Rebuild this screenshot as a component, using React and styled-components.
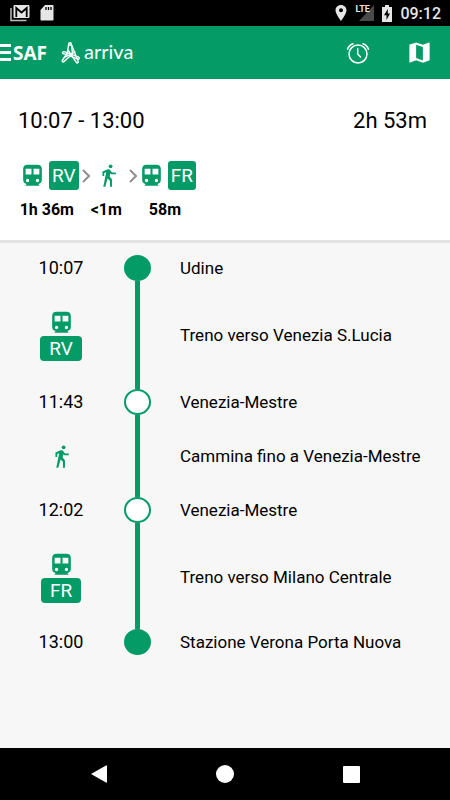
// vendor
import React from 'react';
import styled, { createGlobalStyle } from 'styled-components';

const stops = [
    { kind: 'stop', time: '10:07', label: 'Udine', first: true },
    { kind: 'leg', mode: 'train', line: 'RV', label: 'Treno verso Venezia S.Lucia' },
    { kind: 'stop', time: '11:43', label: 'Venezia-Mestre' },
    { kind: 'leg', mode: 'walk', label: 'Cammina fino a Venezia-Mestre' },
    { kind: 'stop', time: '12:02', label: 'Venezia-Mestre' },
    { kind: 'leg', mode: 'train', line: 'FR', label: 'Treno verso Milano Centrale' },
    { kind: 'stop', time: '13:00', label: 'Stazione Verona Porta Nuova', last: true },
];

const legs = [
    { mode: 'train', line: 'RV', duration: '1h 36m' },
    { mode: 'walk', duration: '<1m' },
    { mode: 'train', line: 'FR', duration: '58m' },
];

const TrainIcon = () => (
    <svg width='27' height='27' viewBox='0 0 24 24' fill='currentColor' fillRule='evenodd' aria-hidden='true'>
        <path d='M7.600 2.500h8.800c2.500 0 3.900 1.400 3.900 3.800v9.700c0 2-1.300 3.300-3.100 3.500l1.200 1.700H5.600l1.200-1.700c-1.800-.2-3.100-1.500-3.100-3.500V6.300c0-2.400 1.400-3.800 3.900-3.800zM5.900 6v5.200h5.200V6zM12.900 6v5.200h5.200V6zM7.600 14.900a1.500 1.500 0 100 3 1.500 1.500 0 000-3zM16.400 14.900a1.500 1.500 0 100 3 1.500 1.500 0 000-3z' />
    </svg>
);

const WalkIcon = () => (
    <svg width='25' height='25' viewBox='0 0 24 24' fill='currentColor' aria-hidden='true'>
        <circle cx='14' cy='3.2' r='1.8' />
        <path d='M9.8 8.9L7 22.8h1.9l2.2-8 2.3 2.2v5.800h1.900v-7.200l-2.200-2.600.6-3.100.9.900H19V9.100h-3.600l-1.700-2.200c-.4-.6-1-.9-1.700-.9-.3 0-.5.1-.8.1L6.200 8.100V12.400h1.700V9.500z' />
    </svg>
);

const ChevronIcon = () => (
    <svg width='10' height='16' viewBox='0 0 10 16' fill='none' stroke='#8f8f8f' strokeWidth='2' aria-hidden='true'>
        <path d='M2 2l6 6-6 6' />
    </svg>
);

const AlarmIcon = () => (
    <svg width='26' height='26' viewBox='0 0 26 26' fill='none' stroke='currentColor' strokeWidth='1.500' strokeLinecap='round' aria-hidden='true'>
        <circle cx='13' cy='14' r='9' />
        <path d='M12.700 8.500v5.500l2.800 3M2.500 9.300Q3.700 5.300 8 3.700M18 3.700q4.300 1.600 5.500 5.600' />
    </svg>
);

const MapIcon = () => (
    <svg width='27' height='27' viewBox='0 0 24 24' fill='currentColor' aria-hidden='true'>
        <path d='M20.5 3l-.16.03L15 5.1 9 3 3.36 4.9c-.21.07-.36.25-.36.48V20.5c0 .28.22.5.5.5l.16-.03L9 18.9l6 2.1 5.64-1.9c.21-.07.36-.25.36-.48V3.5c0-.28-.22-.5-.5-.5zM15 19l-6-2.11V5l6 2.11V19z' />
    </svg>
);

const ArrivaMark = () => (
    <svg width='20' height='24' viewBox='0 0 20 24' fill='none' stroke='currentColor' strokeWidth='1.400' strokeLinecap='round' strokeLinejoin='round' aria-hidden='true'>
        <circle cx='9' cy='3' r='1.300' />
        <path d='M7.500 4L6.300 12l-5 7.500c-.5 1.200.8 2 1.700 1L11.500 13l-.9-9' />
        <path d='M10.800 4.500l6.500 16.200c.2 1.300-1.300 1.700-2 .6L7 9' />
        <path d='M2 10.800c-1 .9-.3 2 .7 1.900L17 18.200c1.300.2 1.800-1.300.8-2L4 10.800c-.7-.3-1.300-.3-2 0z' />
        <path d='M3.500 16.500l10.500-5.500' />
    </svg>
);

const MailIcon = () => (
    <svg width='20' height='18' viewBox='0 0 20 18' aria-hidden='true'>
        <path d='M1 4v12.500h15.500' fill='none' stroke='#bdbdbd' strokeWidth='1.500' />
        <rect x='3.500' y='1' width='16' height='13' rx='1' fill='#e6e6e6' />
        <path d='M6.300 13V4l5.200 4.500L16.700 4v9' fill='none' stroke='#000' strokeWidth='1.800' />
    </svg>
);

const SdIcon = () => (
    <svg width='14' height='18' viewBox='0 0 14 18' aria-hidden='true'>
        <path d='M5 1h7.500c.6 0 1 .4 1 1v13.500c0 .6-.4 1-1 1h-11c-.6 0-1-.4-1-1V6z' fill='#e6e6e6' />
        <path d='M6 3v3M8.500 3v3M11 3v3' stroke='#000' strokeWidth='1.300' />
    </svg>
);

const PinIcon = () => (
    <svg width='12' height='18' viewBox='0 0 12 18' aria-hidden='true'>
        <path d='M6 1C3 1 .5 3.300.5 6.300.5 10 6 17 6 17s5.500-7 5.500-10.700C11.500 3.300 9 1 6 1zm0 7.200a2 2 0 110-4 2 2 0 010 4z' fill='#e6e6e6' />
    </svg>
);

const SignalIcon = () => (
    <svg width='15' height='16' viewBox='0 0 15 16' aria-hidden='true'>
        <path d='M15 0v16H0z' fill='#4a4a4a' />
    </svg>
);

const BatteryIcon = () => (
    <svg width='10' height='17' viewBox='0 0 10 17' aria-hidden='true'>
        <path d='M3 0h4v2h3v15H0V2h3z' fill='#e6e6e6' />
        <path d='M5.800 4L2 10.200h2.500V15L8 8.500H5.800z' fill='#000' />
    </svg>
);

const ModeIcon = ({ mode }) => mode === 'train' ? <TrainIcon /> : <WalkIcon />;

const TimelineRow = props => {
    const { kind, time, mode, line, label, first, last } = props;

    if (kind === 'stop') {
        return (
            <Row $height={ last ? 36 : 40 }>
                <Aside>{ time }</Aside>
                <Rail>
                    <Track $hidden={ first } />
                    <Dot $filled={ first || last } />
                    <Track $hidden={ last } />
                </Rail>
                <RowLabel>{ label }</RowLabel>
            </Row>
        );
    }

    return (
        <Row $height={ mode === 'train' ? 94 : 68 }>
            <Aside>
                <ModeIcon mode={ mode } />
                { line && <LineBadge>{ line }</LineBadge> }
            </Aside>
            <Rail>
                <Track />
            </Rail>
            <RowLabel>{ label }</RowLabel>
        </Row>
    );
};

export default function App() {
    return (
        <Screen>
            <GlobalStyle />
            <StatusBar>
                <StatusGroup $gap={ 10 }>
                    <MailIcon />
                    <SdIcon />
                </StatusGroup>
                <StatusGroup $gap={ 8 }>
                    <PinIcon />
                    <Signal>
                        <SignalIcon />
                        <Network>LTE</Network>
                    </Signal>
                    <BatteryIcon />
                    <Clock>09:12</Clock>
                </StatusGroup>
            </StatusBar>

            <AppBar>
                <MenuButton type='button' aria-label='Menu'>
                    <MenuBar />
                    <MenuBar />
                    <MenuBar />
                </MenuButton>
                <SafLogo>SAF</SafLogo>
                <ArrivaLogo>
                    <ArrivaMark />
                    <ArrivaName>arriva</ArrivaName>
                </ArrivaLogo>
                <Actions>
                    <IconButton type='button' aria-label='Promemoria'>
                        <AlarmIcon />
                    </IconButton>
                    <IconButton type='button' aria-label='Mappa'>
                        <MapIcon />
                    </IconButton>
                </Actions>
            </AppBar>

            <Summary>
                <SummaryTitle>
                    <span>10:07 - 13:00</span>
                    <span>2h 53m</span>
                </SummaryTitle>
                <Legs>
                    { legs.map((leg, index) => (
                        <React.Fragment key={ leg.duration }>
                            { index > 0 && (
                                <Separator>
                                    <ChevronIcon />
                                </Separator>
                            ) }
                            <Leg>
                                <LegIcons>
                                    <ModeIcon mode={ leg.mode } />
                                    { leg.line && <LegBadge>{ leg.line }</LegBadge> }
                                </LegIcons>
                                <Duration>{ leg.duration }</Duration>
                            </Leg>
                        </React.Fragment>
                    )) }
                </Legs>
            </Summary>

            <Timeline>
                { stops.map((stop, index) => (
                    <TimelineRow key={ index } { ...stop } />
                )) }
            </Timeline>

            <NavBar>
                <NavButton type='button' aria-label='Indietro'>
                    <svg width='18' height='20' viewBox='0 0 18 20' fill='#fff'>
                        <path d='M1 10L16 1.500q1-.5 1 .5v16q0 1-1 .5z' />
                    </svg>
                </NavButton>
                <NavButton type='button' aria-label='Home'>
                    <svg width='20' height='20' viewBox='0 0 20 20' fill='#fff'>
                        <circle cx='10' cy='10' r='9' />
                    </svg>
                </NavButton>
                <NavButton type='button' aria-label='Recenti'>
                    <svg width='20' height='20' viewBox='0 0 20 20' fill='#fff'>
                        <rect x='2' y='2' width='17' height='17' rx='1' />
                    </svg>
                </NavButton>
            </NavBar>
        </Screen>
    );
}

const GlobalStyle = createGlobalStyle`
    :root {
        --primary: #049b67;
    }

    * {
        box-sizing: border-box;
    }

    body {
        margin: 0;
        font-family: Roboto, sans-serif;
        color: #000;
    }

    svg {
        display: block;
        flex-shrink: 0;
    }

    button {
        border: 0;
        padding: 0;
        background: none;
        color: inherit;
        cursor: pointer;
    }
`;

const Screen = styled.div`
    display: flex;
    flex-direction: column;
    min-height: 100vh;
    background: #f7f7f7;
`;

const StatusBar = styled.div`
    display: flex;
    justify-content: space-between;
    align-items: center;
    height: 26px;
    padding: 0 9px 0 10px;
    background: #000;
    color: #e6e6e6;
`;

const StatusGroup = styled.div`
    display: flex;
    align-items: center;
    gap: ${props => props.$gap}px;
`;

const Signal = styled.div`
    display: flex;
    position: relative;
    padding-left: 4px;
`;

const Network = styled.span`
    position: absolute;
    top: 0;
    left: 0;
    font-size: 9px;
    font-weight: bold;
    line-height: 8px;
`;

const Clock = styled.span`
    font-size: 16px;
    font-weight: 500;
`;

const AppBar = styled.header`
    display: flex;
    align-items: center;
    height: 53px;
    background: var(--primary);
    color: white;
`;

const MenuButton = styled.button`
    display: flex;
    flex-direction: column;
    gap: 4px;
    width: 11px;
`;

const MenuBar = styled.span`
    height: 3px;
    background: white;
`;

const SafLogo = styled.span`
    margin: 0 14px 0 2px;
    font: bold 19px/24px 'Open Sans', sans-serif;
`;

const ArrivaLogo = styled.div`
    display: flex;
    align-items: flex-start;
    gap: 3px;
`;

const ArrivaName = styled.span`
    font: 20px/20px Lato, sans-serif;
`;

const Actions = styled.div`
    display: flex;
    gap: 35px;
    margin-left: auto;
    padding-right: 17px;
`;

const IconButton = styled.button`
    display: flex;
    align-items: center;
`;

const Summary = styled.section`
    padding: 29px 23px 20px 18px;
    background: white;
    border-bottom: 3px solid #e4e4e4;
`;

const SummaryTitle = styled.h1`
    display: flex;
    justify-content: space-between;
    margin: 0 0 27px;
    font-size: 22px;
    font-weight: normal;
    line-height: 26px;
`;

const Legs = styled.div`
    display: flex;
    padding-left: 1px;
`;

const Leg = styled.div`
    display: flex;
    flex-direction: column;
    align-items: center;
    gap: 10px;
`;

const LegIcons = styled.div`
    display: flex;
    align-items: center;
    gap: 3px;
    height: 29px;
    color: var(--primary);
`;

const LegBadge = styled.span`
    padding: 0 3px;
    border-radius: 3px;
    background: var(--primary);
    color: white;
    font-size: 19px;
    line-height: 29px;
`;

const Separator = styled.div`
    display: flex;
    align-items: center;
    justify-content: flex-end;
    width: 12px;
    height: 29px;
`;

const Duration = styled.span`
    padding-right: 4px;
    font-size: 16px;
    font-weight: bold;
    line-height: 20px;
`;

const Timeline = styled.main`
    flex: 1;
    padding: 5px 0;
`;

const Row = styled.div`
    display: grid;
    grid-template-columns: 122px 31px 1fr;
    height: ${props => props.$height}px;
    font-size: 18px;
    line-height: 22px;
`;

const Aside = styled.div`
    display: flex;
    flex-direction: column;
    align-items: center;
    justify-content: center;

    svg {
        color: var(--primary);
    }
`;

const LineBadge = styled.span`
    padding: 0 9px;
    border-radius: 4px;
    background: var(--primary);
    color: white;
    font-size: 19px;
    line-height: 25px;
`;

const Rail = styled.div`
    display: flex;
    flex-direction: column;
    align-items: center;
`;

const Track = styled.div`
    flex: 1;
    width: 5px;
    background: ${props => props.$hidden ? 'transparent' : 'var(--primary)'};
`;

const Dot = styled.div`
    width: 27px;
    height: 26px;
    border: 2px solid var(--primary);
    border-radius: 50%;
    background: ${props => props.$filled ? 'var(--primary)' : 'white'};
`;

const RowLabel = styled.div`
    align-self: center;
    padding-left: 27px;
    font-size: 17px;
`;

const NavBar = styled.nav`
    display: flex;
    height: 52px;
    padding: 0 8%;
    background: #000;
`;

const NavButton = styled.button`
    display: flex;
    flex: 1;
    align-items: center;
    justify-content: center;
`;
